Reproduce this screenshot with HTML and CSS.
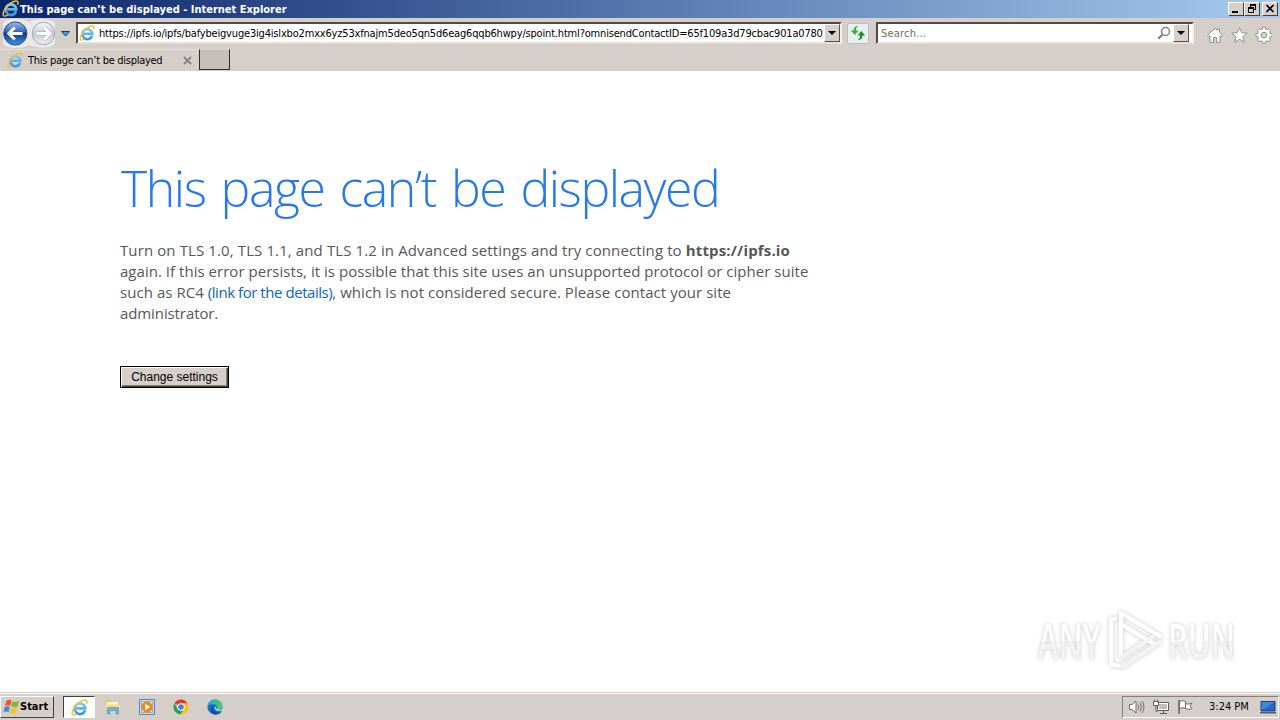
FILE: index.html
```html
<!DOCTYPE html>
<html lang="en">
<head>
  <meta charset="UTF-8">
  <meta name="viewport" content="width=device-width, initial-scale=1.0">
  <title>This page can’t be displayed</title>
  <link rel="stylesheet" href="styles.css">
</head>
<body>

<svg class="defs" width="0" height="0">
  <defs>
    <linearGradient id="ieBlue" x1="0" y1="0" x2="0" y2="1">
      <stop offset="0" stop-color="#7ccbf2"/>
      <stop offset="1" stop-color="#3d98da"/>
    </linearGradient>
    <linearGradient id="backBlue" x1="0" y1="0" x2="0" y2="1">
      <stop offset="0" stop-color="#9db9e3"/>
      <stop offset=".4" stop-color="#3a6cc0"/>
      <stop offset=".5" stop-color="#12388c"/>
      <stop offset="1" stop-color="#3a9ae8"/>
    </linearGradient>
    <linearGradient id="fwdGray" x1="0" y1="0" x2="0" y2="1">
      <stop offset="0" stop-color="#f8fafc"/>
      <stop offset=".5" stop-color="#c5cad4"/>
      <stop offset="1" stop-color="#eef2f6"/>
    </linearGradient>
    <linearGradient id="edgeTeal" x1="0" y1="0" x2="1" y2="0">
      <stop offset="0" stop-color="#1b9de2"/>
      <stop offset="1" stop-color="#55cf62"/>
    </linearGradient>
    <symbol id="ie" viewBox="0 0 16 16">
      <path d="M13.2 10.6A5 5 0 1 1 13.4 8.8H5" fill="none" stroke="url(#ieBlue)" stroke-width="2.6"/>
      <path d="M1.7 15C-.4 12.4 3.6 5.7 8.5 2.7 12 .7 15.1.4 15.1 2.3c0 .8-.3 1.5-.8 2.2" fill="none" stroke="#efc13a" stroke-width="1.4"/>
      <path d="M1.7 15c1 .5 2.5-.1 3.8-.9" fill="none" stroke="#efc13a" stroke-width="1.2"/>
    </symbol>
  </defs>
</svg>

<div class="title-bar">
  <svg class="title-icon" width="17" height="17"><use href="#ie"/></svg>
  <span class="title-text">This page can’t be displayed - Internet Explorer</span>
  <div class="window-buttons">
    <span class="win-btn"><svg width="14" height="12"><path d="M3 9h6" stroke="#000" stroke-width="2"/></svg></span>
    <span class="win-btn"><svg width="14" height="12"><path d="M5 1.5h6M5 2.5h6M5.5 1v3M10.5 1v6M9 6.5h2M3 4.5h6M3 5.5h6M3.5 4v6M8.5 4v6M3 9.5h6" fill="none" stroke="#000"/></svg></span>
    <span class="win-btn close"><svg width="14" height="12"><path d="M3.5 2l7 7M10.5 2l-7 7" stroke="#000" stroke-width="1.7"/></svg></span>
  </div>
</div>

<div class="toolbar">
  <svg class="nav-buttons" width="73" height="30" viewBox="0 0 73 30">
    <path d="M3 5C8-1 22 0 29 4 36 0 50 0 55 5v21C50 31 36 30 29 27 22 31 7 31 3 26z" fill="#e9e9ea"/>
    <circle cx="15.3" cy="15.5" r="11.6" fill="url(#backBlue)" stroke="#294b86"/>
    <path d="M22.5 15.5H9.5M14.8 9.5l-6 6 6 6" fill="none" stroke="#fff" stroke-width="3"/>
    <circle cx="43.5" cy="15.5" r="11.2" fill="url(#fwdGray)" stroke="#a3a8b0"/>
    <path d="M36.5 15.5h13M44.2 9.5l6 6-6 6" fill="none" stroke="#a9adb5" stroke-width="4"/>
    <path d="M36.5 15.5h13M44.2 9.5l6 6-6 6" fill="none" stroke="#fff" stroke-width="3"/>
    <path d="M61.5 13.5h8l-4 4.5z" fill="#3ba5e8" stroke="#153e6b"/>
  </svg>
  <div class="field address">
    <svg class="address-icon" width="16" height="16"><use href="#ie"/></svg>
    <span class="url">https://ipfs.io/ipfs/bafybeigvuge3ig4islxbo2mxx6yz53xfnajm5deo5qn5d6eag6qqb6hwpy/spoint.html?omnisendContactID=65f109a3d79cbac901a0780</span>
    <span class="drop-btn"><svg width="12" height="14"><path d="M2 5h8L6 9z" fill="#000"/></svg></span>
  </div>
  <span class="refresh">
    <svg width="16" height="16" viewBox="0 0 16 16">
      <path d="M7.5 1C4.5 1.2 3.6 3 3.6 5.5H.8L4.8 10 8.5 5.5H6c0-1.800.2-3 1.500-3.500z" fill="#3fae46"/>
      <path d="M8.5 15c3-.3 4-2 4-4.5h2.700L11.400 6l-3.900 4.500h2.600c0 1.800-.3 2.900-1.600 3.400z" fill="#238b2c"/>
    </svg>
  </span>
  <div class="field search">
    <span class="placeholder">Search...</span>
    <svg width="14" height="14" viewBox="0 0 14 14"><circle cx="8.5" cy="5.5" r="4" fill="#fff" stroke="#808080" stroke-width="1.5"/><path d="M5.5 8.5l-4.2 4.2" stroke="#808080" stroke-width="2.2"/></svg>
    <span class="drop-btn"><svg width="12" height="14"><path d="M2 5h8L6 9z" fill="#000"/></svg></span>
  </div>
  <svg class="commands" width="66" height="20" viewBox="0 0 66 20" fill="#fff" stroke="#929292">
    <path d="M1.5 10.5L9 3l2.5 2.5V4h2v3.5l3 3-1.3 1.3-1.2-1V17.5h-3.5v-5h-3v5H4v-6.7l-1.200 1z"/>
    <path d="M33.5 2.5l2.1 5.2 5.6.4-4.3 3.6 1.4 5.5-4.8-3-4.8 3 1.4-5.5-4.3-3.6 5.6-.4z"/>
    <path d="M56.7 2.5h2.6l.4 2 1.4.6 1.7-1.1 1.8 1.8-1.1 1.7.6 1.4 2 .4v2.6l-2 .4-.6 1.4 1.1 1.7-1.8 1.8-1.7-1.1-1.4.6-.4 2h-2.600l-.4-2-1.400-.6-1.700 1.100-1.800-1.800 1.100-1.700-.6-1.400-2-.4V9.300l2-.4.6-1.400-1.100-1.700L53.200 4l1.700 1.100 1.400-.6z" transform="translate(0 -.4)"/>
    <circle cx="58" cy="10.2" r="2.9" fill="#d6d0c8"/>
  </svg>
</div>

<div class="tab-row">
  <div class="tab">
    <svg width="16" height="16"><use href="#ie"/></svg>
    <span class="tab-title">This page can’t be displayed</span>
    <svg class="tab-close" width="9" height="9"><path d="M1 1l7 7M8 1L1 8" stroke="#858079" stroke-width="1.8"/></svg>
  </div>
  <div class="new-tab"></div>
</div>

<main class="content">
  <h1>This page can’t be displayed</h1>
  <p class="message">
    <span class="line l1">Turn on TLS 1.0, TLS 1.1, and TLS 1.2 in Advanced settings and try connecting to <b>https://ipfs.io</b></span>
    <span class="line l2">again. If this error persists, it is possible that this site uses an unsupported protocol or cipher suite</span>
    <span class="line l3">such as RC4 <a href="#">(link for the details)</a>, which is not considered secure. Please contact your site</span>
    <span class="line l4">administrator.</span>
  </p>
  <button class="settings" type="button">Change settings</button>

  <div class="watermark">
    <span class="mark-text any">ANY</span>
    <svg width="60" height="66" viewBox="0 0 60 66" fill="none" stroke="#fff" stroke-width="4" stroke-linejoin="round" stroke-linecap="round">
      <path d="M16 49V6l39 23M10 12H6v45l8 2M16 17l33 20"/>
      <path d="M55 35L17 60M49 29L17 50" stroke="#f3f3f3"/>
    </svg>
    <span class="mark-text run">RUN</span>
  </div>
</main>

<div class="taskbar">
  <div class="start">
    <svg width="17" height="16" viewBox="0 0 17 16">
      <path d="M3.5 1.7c2-1.2 3.5-1.1 5 0L7.2 7C5.6 6 3.9 6 2.2 7z" fill="#e8562a"/>
      <path d="M9.4 2.2c1.8 1 4.2 1 6.7-.4L14.7 7.3c-2.4 1.2-4.4 1-6.6 0z" fill="#7dba36"/>
      <path d="M1.8 8c1.8-1 3.4-.9 5 0l-1.3 5.2c-1.6-1-3.3-1-5.2 0z" fill="#3f87d6"/>
      <path d="M7.8 8.4c2 1 4.2 1 6.6 0L13 13.5c-2.1 1.3-4.4 1.2-6.5.1z" fill="#f7bf2c"/>
    </svg>
    <span>Start</span>
  </div>
  <div class="task active"><svg width="17" height="17"><use href="#ie"/></svg></div>
  <div class="task">
    <svg width="16" height="16" viewBox="0 0 16 16">
      <path d="M1 1.5h5l1 1.5h7v9H1z" fill="#e6c65e"/>
      <path d="M2 3h11v3H2z" fill="#fff6c4"/>
      <path d="M1 5.5h14v5H1z" fill="#f5de86"/>
      <path d="M2.5 15V8.5h11V15H11v-3.5H5V15z" fill="#6ab4dd" stroke="#4b94c0" stroke-width=".6"/>
    </svg>
  </div>
  <div class="task">
    <svg width="16" height="16" viewBox="0 0 16 16">
      <path d="M.5.5h15v15H.5z" fill="#c4dbee" stroke="#5688b6"/>
      <path d="M2.5 2.5h11v11h-11z" fill="#e9f2fa" stroke="#8ab1d5"/>
      <circle cx="8" cy="8" r="5.7" fill="#f0881b"/>
      <path d="M6.3 4.8v6.4L11.3 8z" fill="#fff"/>
    </svg>
  </div>
  <div class="task">
    <svg width="16" height="16" viewBox="0 0 16 16">
      <path d="M8 8L1.5 4.2A7.5 7.5 0 0 1 14.5 4.3z" fill="#e23b2e"/>
      <path d="M8 4.3h6.5A7.5 7.5 0 0 1 7.5 15.5L11 9.5z" fill="#fbc116"/>
      <path d="M5 10L1.5 4.2A7.5 7.5 0 0 0 7.5 15.5L11 9.5z" fill="#2ba24c"/>
      <circle cx="8" cy="8" r="3.7" fill="#fff"/>
      <circle cx="8" cy="8" r="2.8" fill="#3f7fe8"/>
    </svg>
  </div>
  <div class="task">
    <svg width="16" height="16" viewBox="0 0 16 16">
      <circle cx="8" cy="8" r="7.6" fill="#1672c4"/>
      <path d="M.5 7.5C.8 3.3 4 .4 8 .4c4.5 0 7.6 3 7.6 6.3 0 2.6-2 4-4.2 4-1.5 0-2.5-.7-1.8-1.6 1-1.3.1-3.6-2.8-3.8C4 5.1 1.500 5.800.5 7.500z" fill="url(#edgeTeal)"/>
      <path d="M6.3 6.5C4.5 10 7 13.5 11 13.5c1.6 0 2.9-.5 3.6-1-2.2 3.3-6 3.7-8.3 2.4C3 13 3 8.5 6.3 6.5z" fill="#10509b"/>
      <path d="M8.7 7.3c-1.9 1-1.1 4.7 3.3 4.7 2 0 3.4-1 3.7-1.4v-1.1C14.5 10.9 8 11.5 8.7 7.3z" fill="#d6d0c8"/>
    </svg>
  </div>
  <div class="tray">
    <svg width="17" height="16" viewBox="0 0 17 16" fill="none" stroke="#6c6c6c">
      <path d="M1.5 5.5h2.5L8 2v12L4 10.5H1.5z" fill="#fff"/>
      <path d="M10 5.5q1.5 2.5 0 5M12 3.5q3 4.5 0 9M14 2q4 6 0 12"/>
    </svg>
    <svg width="16" height="16" viewBox="0 0 16 16" fill="#fff" stroke="#5f5f5f">
      <path d="M4.5 3.5h11v8h-11z"/>
      <path d="M6 5h8v5H6z" fill="#bdbdbd" stroke="none"/>
      <path d="M7 14.5h7M10.5 12v2"/>
      <path d="M.5 2.5h5v4h-5zM1.5.5v2M4.5.5v2M3 7v5.5h1.5"/>
    </svg>
    <svg width="17" height="16" viewBox="0 0 17 16" fill="#fff" stroke="#6c6c6c">
      <path d="M2.5 2.5c2-1 4-1 6 0v7c-2-1-4-1-6 0zM8.5 4.5c2 1 4 .5 6.5-.5l-2 3 2 2.5c-2 1-4.5 1-6.5 0z"/>
      <path d="M2 1v14" stroke-width="1.6"/>
    </svg>
    <span class="clock">3:24 PM</span>
    <svg class="desktop" width="16" height="14" viewBox="0 0 16 14">
      <path d="M1 1.5h14v9.5H1z" fill="#2367c4" stroke="#173f7d"/>
      <path d="M1.5 2h13L6 8l-4.5 2z" fill="#4486d8"/>
      <path d="M0 12h16v1.5H0z" fill="#4b5e7a"/>
    </svg>
  </div>
</div>

</body>
</html>
```

FILE: styles.css
```css
* { box-sizing: border-box; }
body {
  margin: 0;
  width: 1280px;
  height: 720px;
  overflow: hidden;
  display: flex;
  flex-direction: column;
  background: #fff;
  font: 11px/14px "DejaVu Sans Condensed", "DejaVu Sans", sans-serif;
  color: #000;
}
svg { display: block; flex: none; }
.defs { position: absolute; }

/* title bar */
.title-bar {
  height: 18px;
  display: flex;
  align-items: center;
  padding: 0 2px;
  background: linear-gradient(to right, #0a246a, #a6caf0);
  color: #fff;
}
.title-icon { margin-bottom: 1px; }
.title-text { margin-left: 1px; padding-top: 1px; font-weight: bold; white-space: nowrap; }
.window-buttons { display: flex; margin-left: auto; }
.win-btn {
  width: 16px;
  height: 14px;
  background: #d6d0c8;
  border: 1px solid;
  border-color: #fff #404040 #404040 #fff;
}
.win-btn.close { margin-left: 2px; }

/* navigation */
.toolbar { height: 31px; display: flex; align-items: flex-start; background: #d6cfc9; }
.nav-buttons { margin-right: 3px; }
.field {
  height: 22px;
  margin-top: 4px;
  display: flex;
  align-items: center;
  background: #fff;
  border: 2px solid;
  border-color: #514a46 #f4f2ee #e4dfd8 #514a46;
}
.address { width: 766px; padding-left: 1px; }
.url { flex: 1; margin-left: 4px; padding-top: 2px; overflow: hidden; white-space: nowrap; letter-spacing: -0.18px; }
.drop-btn {
  width: 16px;
  height: 18px;
  padding: 1px;
  background: #d6d0c8;
  border: 1px solid;
  border-color: #fff #55504c #55504c #fff;
}
.refresh {
  width: 22px;
  height: 21px;
  margin: 5px 7px 0 5px;
  padding: 1px 2px;
  background: #e6efed;
  border: 1px solid #b6bfc6;
  border-radius: 2px;
}
.search { width: 318px; padding-left: 3px; }
.search .drop-btn { margin: 0 3px 0 2px; }
.placeholder { flex: 1; padding-top: 2px; color: #6d6d6d; letter-spacing: 0.2px; }
.commands { margin: 7px 0 0 12px; }

/* tabs */
.tab-row { height: 22px; display: flex; background: #d6cfc9; }
.tab { width: 199px; display: flex; align-items: center; padding: 0 0 1px 7px; border-top: 1px solid #e4e0da; }
.tab-title { width: 155px; margin-left: 5px; padding-top: 1px; white-space: nowrap; letter-spacing: -0.28px; }
.new-tab {
  width: 31px;
  height: 21px;
  background: #c6bfba;
  border: 1px solid;
  border-color: #d6d0c8 #302c2a #302c2a #302c2a;
}

/* error page */
.content { flex: 1; position: relative; padding: 84px 0 0 120px; }
h1 {
  margin: 0 0 0 1px;
  font: 300 50px/66px "Open Sans", sans-serif;
  color: #2778ec;
  white-space: nowrap;
  letter-spacing: -1.45px;
  word-spacing: 3.5px;
}
.message { margin: 19px 0 0; font: 15px/21px "Open Sans", "Noto Sans", sans-serif; color: #575757; }
.line { display: block; width: max-content; white-space: nowrap; }
.l1 { letter-spacing: 0.11px; }
.l2 { letter-spacing: 0.03px; }
.l3 { letter-spacing: 0.05px; }
.l4 { letter-spacing: -0.1px; }
.message b { letter-spacing: 0.15px; }
.message a { color: #0b66c0; text-decoration: none; letter-spacing: -0.45px; }
.settings {
  display: block;
  width: 109px;
  height: 22px;
  margin-top: 42px;
  padding: 0;
  font: 12px/16px "Liberation Sans", sans-serif;
  color: #000;
  background: #d6d0c8;
  border: 1px solid #000;
  border-radius: 0;
  box-shadow: inset 1px 1px #fff, inset -1px -1px #404040, inset -2px -2px #868078;
}
.watermark {
  position: absolute;
  left: 1038px;
  top: 536px;
  display: flex;
  align-items: center;
  filter: drop-shadow(0 0 2px rgba(0, 0, 0, 0.22));
}
.mark-text {
  flex: none;
  width: 105px;
  margin-right: -38px;
  font: 600 49px/66px "Open Sans", sans-serif;
  color: transparent;
  background: linear-gradient(#fff 52%, #f3f3f3 52%);
  background-clip: text;
  -webkit-background-clip: text;
  transform: scaleX(0.63);
  transform-origin: 0 50%;
}
.mark-text.run { margin-left: 3px; }

/* taskbar */
.taskbar {
  height: 28px;
  display: flex;
  align-items: center;
  padding-top: 1px;
  background: #d6cfc9;
  border-top: 1px solid #d6d0c8;
  box-shadow: inset 0 1px #fff;
}
.start {
  width: 54px;
  height: 22px;
  margin-right: 9px;
  display: flex;
  align-items: center;
  padding-left: 2px;
  font-weight: bold;
  border: 1px solid;
  border-color: #fff #404040 #404040 #fff;
}
.task { width: 32px; height: 22px; margin-right: 2px; display: flex; align-items: center; justify-content: center; }
.task.active { background: #fff; border: 1px solid; border-color: #404040 #fff #fff #404040; }
.tray {
  width: 157px;
  height: 22px;
  margin-left: auto;
  margin-right: 1px;
  display: flex;
  align-items: center;
  gap: 8px;
  padding-left: 5px;
  border: 1px solid;
  border-color: #868078 #fff #fff #868078;
}
.clock { width: 43px; margin-left: 7px; white-space: nowrap; }
```
